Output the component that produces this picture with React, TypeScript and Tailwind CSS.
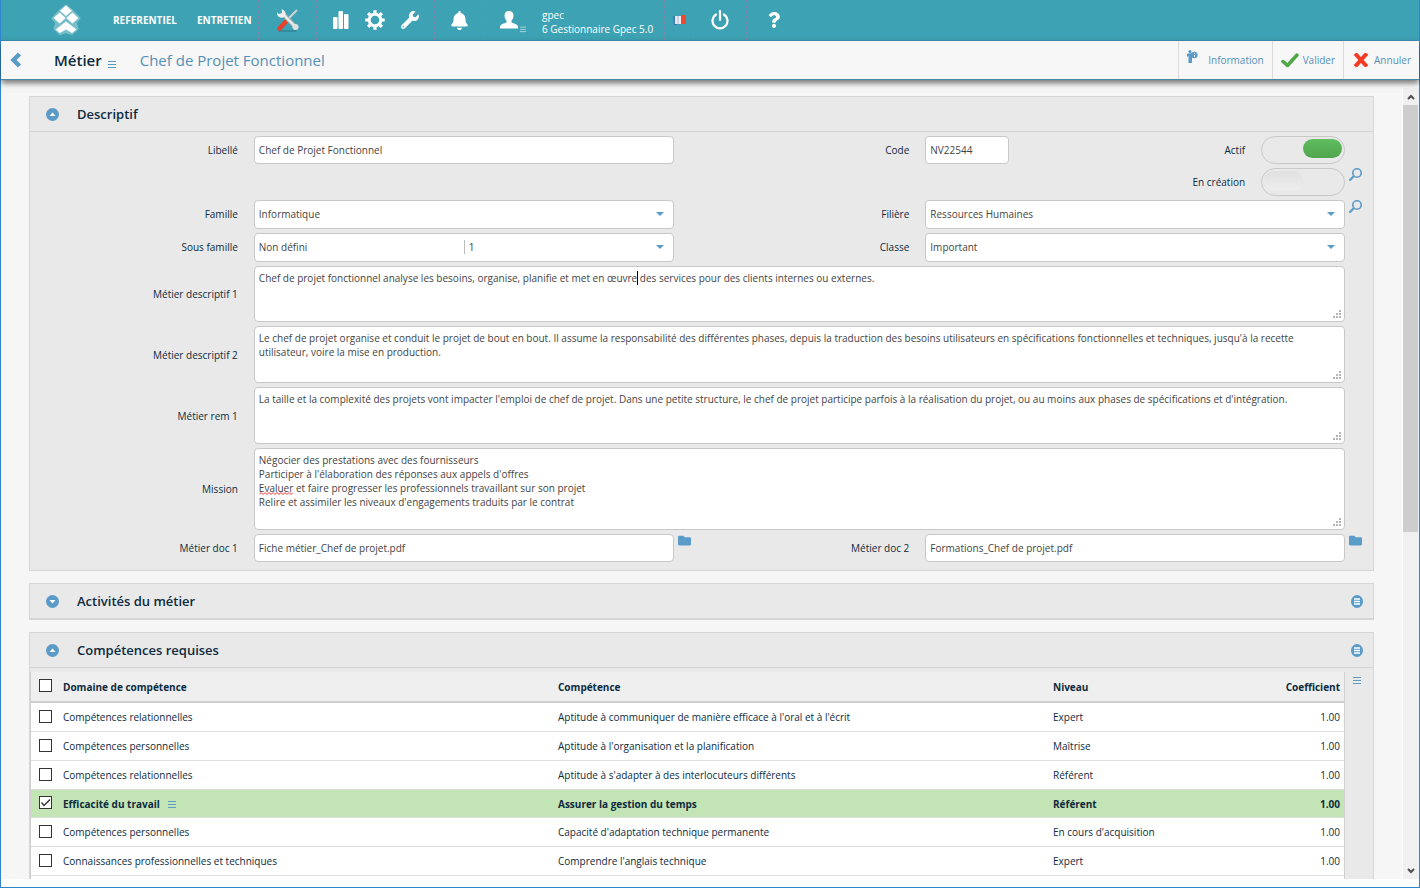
import { FC, ReactNode } from 'react';
import { FaBell, FaFolder, FaQuestion, FaWrench } from 'react-icons/fa';

interface FieldProps {
	id: string;
	label: string;
	children: ReactNode;
}

interface TextProps {
	id: string;
	value: string;
}

interface Skill {
	domain: string;
	name: string;
	level: string;
	selected?: boolean;
}

const skills: Skill[] = [
	{
		domain: 'Compétences relationnelles',
		name: "Aptitude à communiquer de manière efficace à l'oral et à l'écrit",
		level: 'Expert',
	},
	{
		domain: 'Compétences personnelles',
		name: "Aptitude à l'organisation et la planification",
		level: 'Maîtrise',
	},
	{
		domain: 'Compétences relationnelles',
		name: "Aptitude à s'adapter à des interlocuteurs différents",
		level: 'Référent',
	},
	{
		domain: 'Efficacité du travail',
		name: 'Assurer la gestion du temps',
		level: 'Référent',
		selected: true,
	},
	{
		domain: 'Compétences personnelles',
		name: "Capacité d'adaptation technique permanente",
		level: "En cours d'acquisition",
	},
	{
		domain: 'Connaissances professionnelles et techniques',
		name: "Comprendre l'anglais technique",
		level: 'Expert',
	},
];

const mission = [
	'Négocier des prestations avec des fournisseurs',
	"Participer à l'élaboration des réponses aux appels d'offres",
	'Evaluer et faire progresser les professionnels travaillant sur son projet',
	"Relire et assimiler les niveaux d'engagements traduits par le contrat",
].join('\n');

/* ---------- icons ---------- */

const Logo = () => (
	<svg width="30" height="34" viewBox="0 0 30 34" fill="#fff">
		<path
			d="M15 3l7 6 6 6.500-4 4 2 6-5 5-6-2-6 2-5-5 2-6-4-4 6-6.500z"
			stroke="#fff"
			strokeWidth="3"
			strokeLinejoin="round"
			opacity="0.3"
		/>
		<path d="M15 2.500l6 5.200-6 5.300-6-5.300zM8.600 9.500l6 5.500-6 5.500-6-5.500zM21.400 9.500l6 5.500-6 5.500-6-5.500zM15 18.500l10.500 8-4.500 3.500-6-3.500-6 3.500-4.500-3.500z" />
	</svg>
);

const ToolsIcon = () => (
	<svg width="24" height="24" viewBox="0 0 24 24" fill="none" strokeLinecap="round">
		<path d="M3 23h17" stroke="#2b7280" strokeDasharray="2 1" />
		<path d="M20.500 2.500L11 12" stroke="#cfd5d7" strokeWidth="2" />
		<path d="M10 13.500L3.500 20.500" stroke="#e8412c" strokeWidth="4.500" />
		<path d="M7.500 6.500L19 18.500" stroke="#a9b0b3" strokeWidth="4.500" />
		<path d="M7.500 6.500L19 18.500" stroke="#e9ebeb" strokeWidth="2.500" />
		<circle cx="19.500" cy="19" r="3" fill="#dfe2e2" />
		<path d="M5.500 1l.5 4-3.500 1L1 4c-.5 4 2.500 6.500 6 5.500 3.500-1.500 4-6.500-1.500-8.500z" fill="#edefef" />
	</svg>
);

const ChartIcon = () => (
	<svg width="16" height="18" viewBox="0 0 16 18" fill="#fff">
		<rect x="0" y="6" width="4.500" height="12" rx="1" />
		<rect x="5.500" y="0" width="4.500" height="18" rx="1" />
		<rect x="11" y="3" width="4.500" height="15" rx="1" />
	</svg>
);

const GearIcon = () => (
	<svg width="20" height="20" viewBox="0 0 20 20" fill="none" stroke="#fff">
		<circle cx="10" cy="10" r="5.800" strokeWidth="3" />
		<path
			d="M10 .3v3.500M10 16.200v3.500M.3 10h3.500M16.200 10h3.500M3.100 3.100l2.400 2.400M14.500 14.500l2.400 2.400M3.100 16.900l2.400-2.400M14.500 5.500l2.400-2.400"
			strokeWidth="3.200"
		/>
	</svg>
);

const UserIcon = () => (
	<svg width="18" height="18" viewBox="0 0 18 18" fill="#fff">
		<path d="M9 0c3 0 4.500 2 4.500 4.500 0 2.500-1 4-2 5v2c2 1 6.500 1.500 6.500 4.500v1.500H0V16c0-3 4.500-3.500 6.500-4.500v-2c-1-1-2-2.500-2-5C4.500 2 6 0 9 0z" />
	</svg>
);

const PowerIcon = () => (
	<svg width="18" height="20" viewBox="0 0 18 20" fill="none" stroke="#fff" strokeLinecap="round">
		<path d="M5 4.500a7.500 7.500 0 1 0 8 0" strokeWidth="2.200" />
		<path d="M9 1v9" strokeWidth="2.200" />
	</svg>
);

const FlagIcon = () => (
	<svg width="13" height="10" viewBox="0 0 13 10">
		<path d="M0 1h4v9H1z" fill="#3f74bb" />
		<path d="M2 1h7v8H2z" fill="#e9edf3" />
		<path d="M4 1h2v8H4z" fill="#c9d3e4" />
		<path d="M8 0h4l1 2v7H8z" fill="#ee4a32" />
	</svg>
);

const LinesIcon: FC<{ className?: string }> = ({ className }) => (
	<svg width="8" height="8" viewBox="0 0 8 8" className={className} stroke="currentColor">
		<path d="M0 1.500h8M0 4.500h8M0 7.500h8" />
	</svg>
);

const RoundListIcon = () => (
	<svg width="12" height="13" viewBox="0 0 12 13">
		<ellipse cx="6" cy="6.500" rx="6" ry="6.500" fill="#5b9bc8" />
		<path d="M3 4h6M3 6.500h6M3 9h6" stroke="#fff" strokeWidth="1.400" />
	</svg>
);

const ToggleIcon: FC<{ open: boolean }> = ({ open }) => (
	<svg width="13" height="13" viewBox="0 0 13 13">
		<circle cx="6.500" cy="6.500" r="6.500" fill="#5b9bc8" />
		<path d={open ? 'M3.500 8h6l-3-3.500z' : 'M3.500 5h6l-3 3.500z'} fill="#fff" />
	</svg>
);

const InfoIcon = () => (
	<svg width="11" height="14" viewBox="0 0 11 14" fill="#5b9bc8">
		<circle cx="3" cy="1.500" r="1.500" />
		<path d="M0 4l2-.8h3V13H3.200V9v4H1.500V6L0 7z" />
		<circle cx="7.300" cy="5" r="3.300" />
		<path d="M7 3h1v1H7zM7 5h1v2H7z" fill="#fff" />
	</svg>
);

const CheckIcon = () => (
	<svg width="18" height="15" viewBox="0 0 18 15" fill="none">
		<path d="M2 8.500l4.500 4L16 2" stroke="#4fa647" strokeWidth="3.500" strokeLinejoin="round" strokeLinecap="round" />
	</svg>
);

const CrossIcon = () => (
	<svg width="14" height="14" viewBox="0 0 14 14" fill="none">
		<path d="M2.500 2l9 10M11.500 2l-9 10" stroke="#f23a24" strokeWidth="4" strokeLinecap="square" />
	</svg>
);

const SearchIcon = () => (
	<svg width="13" height="13" viewBox="0 0 13 13" fill="none" stroke="#5b9bc8">
		<circle cx="8" cy="5" r="4.200" strokeWidth="1.600" />
		<path d="M4.500 8.500L1 12" strokeWidth="2.200" strokeLinecap="round" />
	</svg>
);

const BackIcon = () => (
	<svg width="13" height="16" viewBox="0 0 13 16" fill="none">
		<path d="M10.500 2L4.500 8l6 6" stroke="#5b9bc8" strokeWidth="4.500" />
	</svg>
);

const Arrow = () => (
	<svg
		width="8"
		height="4"
		viewBox="0 0 8 4"
		className="pointer-events-none absolute top-3 right-2.5"
	>
		<path d="M0 0h8L4 4z" fill="#5b9bc8" />
	</svg>
);

const Grip = () => (
	<svg
		width="8"
		height="8"
		viewBox="0 0 8 8"
		className="pointer-events-none absolute right-1 bottom-1"
		fill="#b5b5b5"
	>
		<path d="M6 0h2v2H6zM3 3h2v2H3zM6 3h2v2H6zM0 6h2v2H0zM3 6h2v2H3zM6 6h2v2H6z" />
	</svg>
);

/* ---------- form ---------- */

const control = 'w-full rounded border border-[#c8c8c8] bg-white px-1 text-[#444]';

const Field: FC<FieldProps> = ({ id, label, children }) => (
	<div className="flex items-start">
		<label htmlFor={id} className="flex h-7 w-1/3 items-center justify-end pr-4">
			{label}
		</label>
		{children}
	</div>
);

const WideField: FC<FieldProps> = ({ id, label, children }) => (
	<div className="flex items-center">
		<label htmlFor={id} className="w-1/6 pr-4 text-right">
			{label}
		</label>
		<div className="relative w-13/16">{children}</div>
	</div>
);

const SelectBox: FC<TextProps> = ({ id, value }) => (
	<div className="relative w-5/8">
		<select id={id} className={`${control} block h-[29px] appearance-none pb-0.5`}>
			<option>{value}</option>
		</select>
		<Arrow />
	</div>
);

const Switch: FC<{ id: string; on: boolean }> = ({ id, on }) => (
	<span
		className={`relative flex h-7 w-1/8 rounded-full border border-[#c8c8c8] p-0.5 ${on ? 'justify-end' : ''}`}
	>
		<input
			id={id}
			type="checkbox"
			role="switch"
			defaultChecked={on}
			className="absolute inset-0 cursor-pointer appearance-none"
		/>
		<span
			className={`h-[19px] w-[39px] rounded-full bg-linear-to-b ${on ? 'from-[#60bd60] to-[#50a54e]' : 'from-[#e0e0e0] to-[#ededed]'}`}
		/>
	</span>
);

const SideButton: FC<{ label: string; children: ReactNode }> = ({ label, children }) => (
	<button type="button" aria-label={label} className="ml-1 flex cursor-pointer">
		{children}
	</button>
);

const Panel: FC<{ title: string; open: boolean; menu?: boolean; children?: ReactNode }> = ({
	title,
	open,
	menu,
	children,
}) => (
	<section className="border border-[#d9d5d6] bg-[#e9e9e9]">
		<header className="flex h-[35px] items-center border-b border-[#d5d5d5] pr-2.5 pl-4">
			<button aria-label={title} aria-expanded={open} className="mr-[18px] cursor-pointer">
				<ToggleIcon open={open} />
			</button>
			<h2 className="flex-1 text-[13px] font-semibold">{title}</h2>
			{menu && (
				<button aria-label={`Menu ${title}`} className="cursor-pointer">
					<RoundListIcon />
				</button>
			)}
		</header>
		{children}
	</section>
);

const Checkbox: FC<{ label: string; checked?: boolean }> = ({ label, checked }) => (
	<span className="relative mb-0.5 block size-[13px]">
		<input
			type="checkbox"
			aria-label={label}
			defaultChecked={checked}
			className="block size-[13px] appearance-none border border-[#333] bg-white"
		/>
		{checked && (
			<svg
				viewBox="0 0 13 13"
				className="pointer-events-none absolute inset-0"
				fill="none"
				stroke="#333"
				strokeWidth="1.400"
			>
				<path d="M2.500 6.500L5 9.500l6-6" />
			</svg>
		)}
	</span>
);

/* ---------- bars ---------- */

const sep = 'border-r border-dashed border-[#7f86ad]';

const TopBar = () => (
	<nav className="flex h-[41px] shrink-0 items-stretch border-b border-[#3f8fb5] bg-[#3da2b3] text-white">
		<div className={`flex w-[258px] items-center pl-[50px] text-[10px] font-bold ${sep}`}>
			<a href="#accueil" aria-label="Accueil" className="mr-8">
				<Logo />
			</a>
			<a href="#referentiel" className="mr-5">
				REFERENTIEL
			</a>
			<a href="#entretien">ENTRETIEN</a>
		</div>
		<div className={`flex w-[58px] items-center justify-center ${sep}`}>
			<button aria-label="Outils">
				<ToolsIcon />
			</button>
		</div>
		<div className={`flex w-[118px] items-center justify-center gap-4 ${sep}`}>
			<button aria-label="Statistiques">
				<ChartIcon />
			</button>
			<button aria-label="Paramètres">
				<GearIcon />
			</button>
			<button aria-label="Configuration">
				<FaWrench size={18} />
			</button>
		</div>
		<div className={`flex w-[49px] items-center justify-center ${sep}`}>
			<button aria-label="Notifications">
				<FaBell size={19} />
			</button>
		</div>
		<div className={`flex w-[181px] items-center pl-4 ${sep}`}>
			<button aria-label="Utilisateur" className="mr-4 flex items-end">
				<UserIcon />
				<LinesIcon className="-mb-1 ml-0.5 w-1.5 opacity-70" />
			</button>
			<p className="pt-1 text-[10px] leading-[14px]">
				gpec
				<br />6 Gestionnaire Gpec 5.0
			</p>
		</div>
		<div className={`flex w-[29px] items-center justify-center ${sep}`}>
			<button aria-label="Français">
				<FlagIcon />
			</button>
		</div>
		<div className={`flex w-[53px] items-center justify-center ${sep}`}>
			<button aria-label="Déconnexion">
				<PowerIcon />
			</button>
		</div>
		<div className="flex w-[53px] items-center justify-center">
			<button aria-label="Aide">
				<FaQuestion size={16} />
			</button>
		</div>
	</nav>
);

const TitleBar = () => (
	<div className="relative z-10 flex h-[39px] shrink-0 items-stretch border-b border-[#4a86a8] bg-[#f7f7f7] shadow-[0_3px_6px_rgba(0,0,0,0.55)]">
		<button aria-label="Retour" className="mr-8 ml-2">
			<BackIcon />
		</button>
		<h1 className="flex items-center text-[15px] font-semibold">Métier</h1>
		<button aria-label="Menu métier" className="mt-2 mr-6 ml-1.5 text-[#5b9bc8]">
			<LinesIcon />
		</button>
		<p className="flex flex-1 items-center text-[15px] text-[#5490b8]">
			Chef de Projet Fonctionnel
		</p>
		<div className="flex text-[#5490b8]">
			<button className="flex items-center gap-2.5 border-l border-[#ddd8d9] px-2">
				<span className="mb-1.5">
					<InfoIcon />
				</span>
				Information
			</button>
			<button className="flex items-center gap-1 border-l border-[#ddd8d9] pr-2 pl-2">
				<CheckIcon />
				Valider
			</button>
			<button className="flex items-center gap-1.5 border-l border-[#ddd8d9] pr-2 pl-2.5">
				<CrossIcon />
				Annuler
			</button>
		</div>
	</div>
);

const DescriptionForm = () => (
	<form className="flex flex-col gap-1 pt-1 pb-2">
		<div className="grid grid-cols-2">
			<Field id="libelle" label="Libellé">
				<input id="libelle" defaultValue="Chef de Projet Fonctionnel" className={`${control} h-7 max-w-5/8`} />
			</Field>
			<div className="flex flex-col gap-1">
				<div className="flex">
					<label htmlFor="code" className="flex w-1/3 items-center justify-end pr-4">
						Code
					</label>
					<input id="code" defaultValue="NV22544" className={`${control} h-7 max-w-1/8`} />
					<label htmlFor="actif" className="flex w-3/8 items-center justify-end pr-4">
						Actif
					</label>
					<Switch id="actif" on />
				</div>
				<div className="flex">
					<label htmlFor="creation" className="flex w-5/6 items-center justify-end pr-4">
						En création
					</label>
					<Switch id="creation" on={false} />
					<SideButton label="Rechercher une création">
						<SearchIcon />
					</SideButton>
				</div>
			</div>
		</div>
		<div className="grid grid-cols-2 gap-y-1">
			<Field id="famille" label="Famille">
				<SelectBox id="famille" value="Informatique" />
			</Field>
			<Field id="filiere" label="Filière">
				<SelectBox id="filiere" value="Ressources Humaines" />
				<SideButton label="Rechercher une filière">
					<SearchIcon />
				</SideButton>
			</Field>
			<Field id="sous-famille" label="Sous famille">
				<div className="relative w-5/8">
					<div className="flex h-[29px] items-center rounded border border-[#c8c8c8] bg-white pb-0.5 text-[#444]">
						<select id="sous-famille" className="w-1/2 appearance-none px-1">
							<option>Non défini</option>
						</select>
						<select
							aria-label="Niveau de sous famille"
							className="w-1/2 appearance-none border-l border-[#bbb] px-1"
						>
							<option>1</option>
						</select>
					</div>
					<Arrow />
				</div>
			</Field>
			<Field id="classe" label="Classe">
				<SelectBox id="classe" value="Important" />
			</Field>
		</div>
		<WideField id="descriptif-1" label="Métier descriptif 1">
			<textarea
				id="descriptif-1"
				className={`${control} block h-14 resize-none py-1`}
				defaultValue="Chef de projet fonctionnel analyse les besoins, organise, planifie et met en œuvre des services pour des clients internes ou externes."
			/>
			{/* text cursor */}
			<span className="absolute top-[5px] left-[383px] h-3.5 w-px bg-black" />
			<Grip />
		</WideField>
		<WideField id="descriptif-2" label="Métier descriptif 2">
			<textarea
				id="descriptif-2"
				className={`${control} block h-[57px] resize-none py-1`}
				defaultValue="Le chef de projet organise et conduit le projet de bout en bout. Il assume la responsabilité des différentes phases, depuis la traduction des besoins utilisateurs en spécifications fonctionnelles et techniques, jusqu'à la recette utilisateur, voire la mise en production."
			/>
			<Grip />
		</WideField>
		<WideField id="rem-1" label="Métier rem 1">
			<textarea
				id="rem-1"
				className={`${control} block h-[57px] resize-none py-1`}
				defaultValue="La taille et la complexité des projets vont impacter l'emploi de chef de projet. Dans une petite structure, le chef de projet participe parfois à la réalisation du projet, ou au moins aux phases de spécifications et d'intégration."
			/>
			<Grip />
		</WideField>
		<WideField id="mission" label="Mission">
			<textarea
				id="mission"
				className={`${control} block h-[82px] resize-none py-1`}
				defaultValue={mission}
			/>
			{/* spelling mark under "Evaluer" */}
			<svg
				width="34"
				height="3"
				viewBox="0 0 34 3"
				className="pointer-events-none absolute top-11 left-[5px]"
				fill="none"
				stroke="#e33"
			>
				<path d="M0 2.500l2-2 2 2 2-2 2 2 2-2 2 2 2-2 2 2 2-2 2 2 2-2 2 2 2-2 2 2 2-2 2 2 2-2" />
			</svg>
			<Grip />
		</WideField>
		<div className="grid grid-cols-2">
			<Field id="doc-1" label="Métier doc 1">
				<input id="doc-1" defaultValue="Fiche métier_Chef de projet.pdf" className={`${control} h-7 max-w-5/8`} />
				<SideButton label="Ouvrir le document 1">
					<FaFolder size={13} color="#5b9bc8" />
				</SideButton>
			</Field>
			<Field id="doc-2" label="Métier doc 2">
				<input id="doc-2" defaultValue="Formations_Chef de projet.pdf" className={`${control} h-7 max-w-5/8`} />
				<SideButton label="Ouvrir le document 2">
					<FaFolder size={13} color="#5b9bc8" />
				</SideButton>
			</Field>
		</div>
	</form>
);

const cell = 'border-b border-[#dedede] p-0';
const headCell = 'border-b-2 border-[#cfcfcf] p-0 font-bold';

const Skills = () => (
	<div className="flex items-start pt-1">
		<table className="w-full table-fixed border-separate border-spacing-0 border-x border-[#cfcfcf] bg-white">
			<thead>
				<tr className="h-[31px] bg-[#efefef] text-left">
					<th className={`${headCell} w-8 pl-2`}>
						<Checkbox label="Tout sélectionner" />
					</th>
					<th className={`${headCell} w-[37.7%]`}>Domaine de compétence</th>
					<th className={`${headCell} w-[37.7%]`}>Compétence</th>
					<th className={headCell}>Niveau</th>
					<th className={`${headCell} pr-1 text-right`}>Coefficient</th>
				</tr>
			</thead>
			<tbody>
				{skills.map((skill, i) => (
					<tr
						key={i}
						className={skill.selected ? 'h-7 bg-[#c3e5b5] font-bold' : 'h-[29px]'}
					>
						<td className={`${cell} pl-2`}>
							<Checkbox label={skill.name} checked={skill.selected} />
						</td>
						<td className={cell}>
							{skill.domain}
							{skill.selected && (
								<button aria-label="Menu compétence" className="ml-2 text-[#5b9bc8]">
									<LinesIcon />
								</button>
							)}
						</td>
						<td className={cell}>{skill.name}</td>
						<td className={cell}>{skill.level}</td>
						<td className={`${cell} pr-1 text-right`}>1.00</td>
					</tr>
				))}
				<tr className="h-[29px]">
					<td colSpan={5} />
				</tr>
			</tbody>
		</table>
		<button aria-label="Menu du tableau" className="w-7 shrink-0 pt-1 pl-2 text-[#5b9bc8]">
			<LinesIcon />
		</button>
	</div>
);

const ScrollBar = () => (
	<div className="mt-2 flex w-[17px] flex-col border-l border-white bg-[#f0f0f0]">
		<button aria-label="Défiler vers le haut" className="flex h-[17px] items-center justify-center">
			<svg width="8" height="6" viewBox="0 0 8 6" fill="none" stroke="#505050" strokeWidth="2">
				<path d="M1 5l3-3 3 3" />
			</svg>
		</button>
		<div className="flex-1">
			<div className="mr-px h-[56.400%] bg-[#cdcdcd]" />
		</div>
		<button aria-label="Défiler vers le bas" className="flex h-[17px] items-center justify-center">
			<svg width="8" height="6" viewBox="0 0 8 6" fill="none" stroke="#505050" strokeWidth="2">
				<path d="M1 1l3 3 3-3" />
			</svg>
		</button>
	</div>
);

const App = () => {
	return (
		<div className="flex h-screen flex-col border-x border-b border-[#2f86cc] bg-white font-['Open_Sans',sans-serif] text-[10px] leading-[14px] text-[#0d2b3e]">
			<TopBar />
			<TitleBar />
			<main className="mb-2 flex min-h-0 flex-1 overflow-hidden bg-[#f6f6f6]">
				<div className="flex flex-1 flex-col gap-3 overflow-hidden pt-4 pr-7 pl-7">
					<Panel title="Descriptif" open>
						<DescriptionForm />
					</Panel>
					<Panel title="Activités du métier" open={false} menu />
					<Panel title="Compétences requises" open menu>
						<Skills />
					</Panel>
				</div>
				<ScrollBar />
			</main>
		</div>
	);
};

export default App;
